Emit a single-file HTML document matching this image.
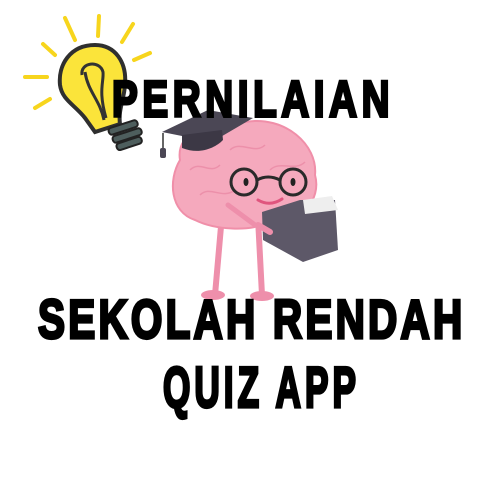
<!DOCTYPE html>
<html><head><style>
html,body{margin:0;padding:0;background:#fff;width:500px;height:500px;overflow:hidden}
.t{position:absolute;font-family:"Liberation Sans",sans-serif;font-weight:bold;color:#000;white-space:nowrap;-webkit-text-stroke:2.5px #000;line-height:1;transform-origin:0 0}
</style></head><body>
<svg width="500" height="500" style="position:absolute;left:0;top:0">
 <g stroke="#f7d51d" stroke-width="4" stroke-linecap="round">
  <line x1="65" y1="18" x2="75" y2="40"/>
  <line x1="99" y1="16" x2="98" y2="36"/>
  <line x1="133" y1="24" x2="122" y2="42"/>
  <line x1="43" y1="44" x2="55" y2="55"/>
  <line x1="134" y1="60" x2="150" y2="53"/>
  <line x1="25" y1="77" x2="47" y2="77"/>
  <line x1="35" y1="108" x2="50" y2="99"/>
 </g>
 <path d="M95 45 C70 45 58 65 60 85 C62 100 75 105 85 118 L95 132 L120 124 C118 110 124 100 125 85 C127 62 115 45 95 45 Z" fill="#fbe43a" stroke="#2f2f2f" stroke-width="4"/>
 <path d="M82 75 C80 62 100 60 103 72 C104 82 98 90 106 118 M85 72 C88 92 100 100 104 120" fill="none" stroke="#333" stroke-width="3"/>
 <g fill="#4e5e5d" stroke="#222" stroke-width="2">
  <rect x="108" y="124" width="30" height="7" rx="3" transform="rotate(-18 123 127)"/>
  <rect x="112" y="132" width="30" height="7" rx="3" transform="rotate(-18 127 135)"/>
  <rect x="116" y="140" width="26" height="7" rx="3" transform="rotate(-18 129 143)"/>
 </g>
 <g stroke="#ee8fab" stroke-width="6" fill="none" stroke-linecap="round">
  <path d="M222 215 L215 295"/>
  <path d="M258 218 L262 295"/>
 </g>
 <ellipse cx="213" cy="295" rx="12" ry="5" fill="#ee8fab"/>
 <ellipse cx="262" cy="296" rx="12" ry="5" fill="#ee8fab"/>
 <path d="M180 160 C175 130 215 118 245 122 C285 115 318 145 315 175 C322 200 300 225 270 222 C250 232 215 230 195 220 C170 212 168 180 180 160 Z" fill="#f5a9bd" stroke="#f08fa9" stroke-width="2"/>
 <g fill="none" stroke="#ec90aa" stroke-width="1.5">
  <path d="M190 170 C200 160 210 175 220 165 M200 195 C210 185 222 200 235 190 M230 150 C240 140 255 155 265 145 M270 170 C280 160 295 172 305 162 M195 150 C205 140 215 150 222 140"/>
 </g>
 <path d="M162 132 L208 110 L253 118 L212 142 Z" fill="#4b4755"/>
 <path d="M182 135 L182 148 C200 155 215 148 223 140 L222 130 Z" fill="#3c3845"/>
 <line x1="163" y1="133" x2="163" y2="150" stroke="#333" stroke-width="1.5"/>
 <rect x="160" y="148" width="6" height="10" rx="2" fill="#4b4755"/>
 <g fill="none" stroke="#2a2a2a" stroke-width="3">
  <circle cx="244" cy="182" r="13"/>
  <circle cx="293" cy="182" r="13"/>
  <path d="M257 180 Q268 174 280 180"/>
 </g>
 <ellipse cx="246" cy="182" rx="2.5" ry="4" fill="#222"/>
 <ellipse cx="293" cy="182" rx="2.5" ry="4" fill="#222"/>
 <path d="M258 200 Q270 207 282 199" stroke="#e0557e" stroke-width="3" fill="none" stroke-linecap="round"/>
 <path d="M262 212 L300 200 L335 200 L338 250 L303 262 L263 240 Z" fill="#5d5868"/>
 <path d="M303 200 L332 196 L338 210 L305 214 Z" fill="#eeeeee"/>
 <path d="M258 225 L270 232" stroke="#ee8fab" stroke-width="6" stroke-linecap="round"/>
 <path d="M228 205 L255 225" stroke="#ee8fab" stroke-width="5" stroke-linecap="round"/>
</svg>
<div class="t" style="left:112px;top:74px;font-size:42px;letter-spacing:5px;transform:scale(0.92,1.22)">PERNILAIAN</div>
<div class="t" style="left:38px;top:293px;font-size:44px;letter-spacing:3.5px;transform:scale(0.92,1.25)">SEKOLAH RENDAH</div>
<div class="t" style="left:163px;top:360px;font-size:44px;letter-spacing:5px;transform:scale(0.8,1.3)">QUIZ APP</div>
</body></html>
